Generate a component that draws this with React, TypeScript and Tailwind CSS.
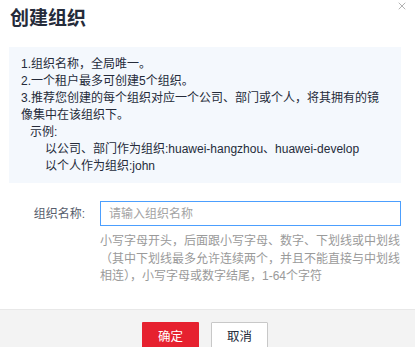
import { X } from "lucide-react";

const font = { fontFamily: '"Liberation Sans", "Noto Sans CJK SC", sans-serif' };

export default function App() {
  return (
    <div className="relative w-[415px] h-[347px] overflow-hidden bg-white text-[#252b3a]" style={font}>
      <button className="absolute right-[7px] top-0 text-[#b3b3b3]">
        <X size={12} strokeWidth={2} />
      </button>

      <div className="h-[309px]">
        <div className="pl-[10px] pt-[9px] h-[47px]">
          <h1 className="text-[19px] leading-[19px] font-bold text-[#252b3a]">创建组织</h1>
        </div>

        <div className="ml-[9px] mr-[14px] bg-[#f4f8fd] py-[8.5px] pl-[12px] text-[12px] leading-[17px] whitespace-nowrap">
          <p>1.组织名称，全局唯一。</p>
          <p>2.一个租户最多可创建5个组织。</p>
          <p>3.推荐您创建的每个组织对应一个公司、部门或个人，将其拥有的镜</p>
          <p>像集中在该组织下。</p>
          <p className="pl-[9px]">示例:</p>
          <p className="pl-[24px]">以公司、部门作为组织:huawei-hangzhou、huawei-develop</p>
          <p className="pl-[24px]">以个人作为组织:john</p>
        </div>

        <div className="mt-[18px] flex items-center">
          <label className="w-[100px] pr-[15px] text-right text-[12px] text-[#575d6c]">组织名称:</label>
          <input
            className="w-[301px] h-[25px] border border-[#4c9ffe] px-[8px] text-[12px] outline-none placeholder:text-[#a3a3a3]"
            placeholder="请输入组织名称"
            style={font}
          />
        </div>

        <div className="ml-[100px] mt-[7px] text-[12px] leading-[17.5px] text-[#9a9a9a] whitespace-nowrap">
          <p>小写字母开头，后面跟小写字母、数字、下划线或中划线</p>
          <p>（其中下划线最多允许连续两个，并且不能直接与中划线</p>
          <p>相连），小写字母或数字结尾，1-64个字符</p>
        </div>
      </div>

      <div className="h-[38px] border-t border-[#e8e8e8] bg-[#f3f3f3] pt-[12px] pl-[142px] flex gap-[12px]">
        <button className="w-[57px] h-[30px] bg-[#e6212f] text-white text-[12.5px] rounded-[1px]">确定</button>
        <button className="w-[57px] h-[30px] bg-white border border-[#c8c8c8] text-[#252b3a] text-[12.5px] rounded-[1px]">取消</button>
      </div>
    </div>
  );
}
